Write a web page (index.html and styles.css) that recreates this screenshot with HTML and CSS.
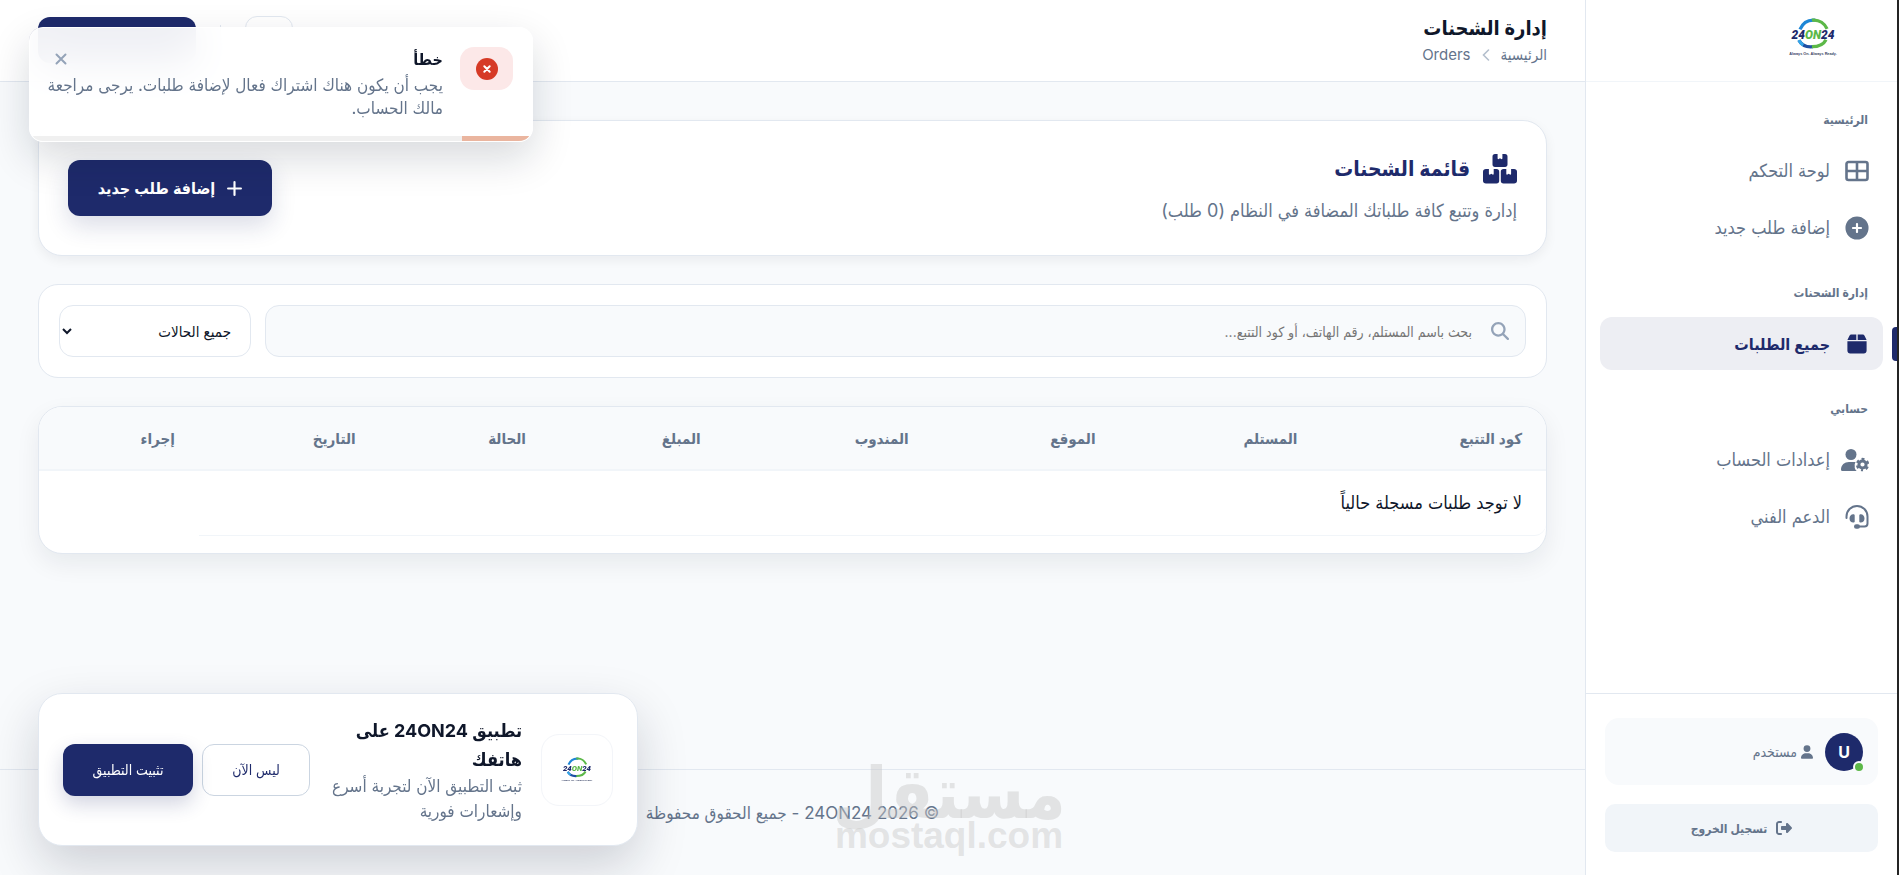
FILE: index.html
```html
<!DOCTYPE html>
<html lang="ar" dir="rtl">
  <head>
    <meta charset="UTF-8" />
    <meta name="viewport" content="width=device-width, initial-scale=1.0" />
    <title>إدارة الشحنات - 24ON24</title>
    <link rel="stylesheet" href="styles.css">
  </head>
  <body>
    <aside class="sidebar">
      <div class="brand">
        <svg class="brand-logo" viewBox="0 0 96 72" role="img" aria-label="24ON24">
          <g fill="none" stroke-width="6">
            <path d="M24 21 C30 7 41 3 52 4" stroke="#1d86d6" />
            <path d="M46 4 C60 2 70 11 74 20" stroke="#5cb848" />
            <path d="M22 41 C28 52 38 54 48 53" stroke="#1e4fa3" />
            <path d="M22 41 C24 46 27 48 30 50" stroke="#34a5e8" />
            <path d="M46 53 C60 53 68 48 72 40" stroke="#5cb848" />
          </g>
          <text x="48" y="38" text-anchor="middle" direction="ltr" class="logo-name"><tspan fill="#1e2a6b">24</tspan><tspan fill="#5cb848">ON</tspan><tspan fill="#1e2a6b">24</tspan></text>
          <text x="48" y="68" text-anchor="middle" direction="ltr" class="logo-tag">Always On. Always Ready.</text>
        </svg>
      </div>

      <nav class="nav">
        <h6 class="nav-label">الرئيسية</h6>
        <a href="#" class="nav-link">
          <svg class="nav-icon" viewBox="0 0 24 24"><path fill="none" stroke="currentColor" stroke-width="2.6" d="M3.500 3h17a2 2 0 0 1 2 2v14a2 2 0 0 1-2 2h-17a2 2 0 0 1-2-2V5a2 2 0 0 1 2-2zM12 3v18M2 12h20" /></svg>
          <span>لوحة التحكم</span>
        </a>
        <a href="#" class="nav-link">
          <svg class="nav-icon" viewBox="-10 -10 532 532"><path fill="currentColor" d="M256 512A256 256 0 1 0 256 0a256 256 0 1 0 0 512zM232 344V280H168c-13.300 0-24-10.700-24-24s10.700-24 24-24h64V168c0-13.300 10.700-24 24-24s24 10.700 24 24v64h64c13.300 0 24 10.700 24 24s-10.700 24-24 24H280v64c0 13.300-10.700 24-24 24s-24-10.700-24-24z" /></svg>
          <span>إضافة طلب جديد</span>
        </a>

        <h6 class="nav-label">إدارة الشحنات</h6>
        <a href="#" class="nav-link active">
          <svg class="nav-icon" viewBox="-56 -24 560 560"><path fill="currentColor" d="M50.700 58.500L0 160H208V32H93.700C75.500 32 58.900 42.300 50.700 58.500zM240 160H448L397.300 58.500C389.100 42.300 372.500 32 354.300 32H240V160zm208 32H0V416c0 35.300 28.700 64 64 64H384c35.300 0 64-28.700 64-64V192z" /></svg>
          <span>جميع الطلبات</span>
        </a>

        <h6 class="nav-label">حسابي</h6>
        <a href="#" class="nav-link">
          <svg class="nav-icon wide" viewBox="0 0 28 24">
            <circle cx="10" cy="6.500" r="5.500" fill="currentColor" />
            <path fill="currentColor" d="M0 21.500C0 17 3.500 14 8 14h4.500c.8 0 1.500.1 2.200.3-.9 1.100-1.200 2.300-.9 3.600-.5 1.700.4 3.600 1.900 5.100H1.300C.5 23 0 22.400 0 21.500z" />
            <circle cx="21.500" cy="16.500" r="3.600" fill="none" stroke="currentColor" stroke-width="3" />
            <circle cx="21.500" cy="16.500" r="5.500" fill="none" stroke="currentColor" stroke-width="2.400" stroke-dasharray="2.900 2.860" stroke-dashoffset="1.400" transform="rotate(90 21.500 16.500)" />
          </svg>
          <span>إعدادات الحساب</span>
        </a>
        <a href="#" class="nav-link">
          <svg class="nav-icon" viewBox="0 0 24 24">
            <path fill="none" stroke="currentColor" stroke-width="2" stroke-linecap="round" d="M1.500 13v-1.500a10.500 10.500 0 0 1 21 0v7a3 3 0 0 1-3 3H13" />
            <path fill="currentColor" d="M8.200 9.200c.9 0 1.500.5 1.500 1.200v6c0 .7-.6 1.200-1.500 1.200-2.100 0-3.700-1.900-3.700-4.200s1.600-4.200 3.700-4.200zM15.800 9.200c-.9 0-1.500.5-1.500 1.200v6c0 .7.6 1.200 1.500 1.200 2.100 0 3.700-1.900 3.700-4.200s-1.600-4.200-3.700-4.200z" />
            <rect x="9" y="19.300" width="6" height="4.400" rx="2.200" fill="currentColor" />
          </svg>
          <span>الدعم الفني</span>
        </a>
      </nav>

      <div class="sidebar-footer">
        <div class="user-card">
          <div class="avatar">U<span class="online"></span></div>
          <div class="user-role">
            <svg class="role-icon" viewBox="0 0 448 512"><path fill="currentColor" d="M224 256A128 128 0 1 0 224 0a128 128 0 1 0 0 256zm-45.700 48C79.800 304 0 383.800 0 482.300C0 498.700 13.300 512 29.700 512H418.300c16.400 0 29.700-13.300 29.700-29.700C448 383.800 368.200 304 269.700 304H178.300z" /></svg>
            <span>مستخدم</span>
          </div>
        </div>
        <button type="button" class="btn-logout">
          <svg class="logout-icon" viewBox="0 0 512 512"><path fill="currentColor" d="M377.900 105.900L500.700 228.700c7.200 7.200 11.300 17.100 11.300 27.300s-4.100 20.100-11.300 27.300L377.900 406.100c-6.400 6.400-15 9.900-24 9.900c-18.700 0-33.900-15.200-33.900-33.900l0-62.100-128 0c-17.700 0-32-14.300-32-32l0-64c0-17.700 14.300-32 32-32l128 0 0-62.100c0-18.700 15.200-33.900 33.900-33.900c9 0 17.600 3.600 24 9.900zM160 96L96 96c-17.700 0-32 14.300-32 32l0 256c0 17.700 14.300 32 32 32l64 0c17.700 0 32 14.300 32 32s-14.300 32-32 32l-64 0c-53 0-96-43-96-96L0 128C0 75 43 32 96 32l64 0c17.700 0 32 14.300 32 32s-14.300 32-32 32z" /></svg>
          <span>تسجيل الخروج</span>
        </button>
      </div>
    </aside>

    <div class="page">
      <header class="topbar">
        <div>
          <h1 class="topbar-title">إدارة الشحنات</h1>
          <nav class="breadcrumb">
            <a href="#">الرئيسية</a>
            <svg class="crumb-sep" viewBox="0 0 8 12"><path fill="none" stroke="currentColor" stroke-width="1.600" stroke-linecap="round" d="M6.500 1L1.500 6l5 5" /></svg>
            <span>Orders</span>
          </nav>
        </div>
        <div class="topbar-actions">
          <button type="button" class="btn-square" aria-label="الإشعارات"></button>
          <span class="divider"></span>
          <button type="button" class="btn-top" aria-label="إضافة طلب جديد"></button>
        </div>
      </header>

      <main class="content">
        <section class="card page-head">
          <div>
            <h2 class="page-title">
              <svg class="boxes-icon" viewBox="0 0 34 30">
                <g fill="currentColor">
                  <path d="M12 0h2.600v4.200c0 .8.600 1.200 1.200.8l1.200-.8 1.200.8c.6.400 1.200 0 1.200-.8V0h2.600c1.600 0 2.500 1 2.500 2.500v8c0 1.500-.9 2.500-2.500 2.500H12c-1.600 0-2.500-1-2.500-2.500v-8C9.500 1 10.400 0 12 0z" />
                  <path d="M3 15h2.900v4.800c0 .8.600 1.200 1.200.8l1.200-.8 1.200.8c.6.400 1.200 0 1.200-.8V15h2.800c1.700 0 2.700 1 2.700 2.700v9c0 1.700-1 2.800-2.700 2.800H3C1.200 29.500 0 28.400 0 26.700v-9C0 16 1.200 15 3 15z" />
                  <path d="M20.500 15h2.800v4.800c0 .8.600 1.200 1.200.8l1.200-.8 1.200.8c.6.400 1.200 0 1.200-.8V15H31c1.800 0 3 1 3 2.700v9c0 1.700-1.200 2.800-3 2.800H20.500c-1.700 0-2.700-1.100-2.700-2.800v-9c0-1.700 1-2.700 2.700-2.700z" />
                </g>
              </svg>
              <span>قائمة الشحنات</span>
            </h2>
            <p class="page-sub">إدارة وتتبع كافة طلباتك المضافة في النظام (0 طلب)</p>
          </div>
          <a href="#" class="btn-add">
            <svg class="plus-icon" viewBox="0 0 14 14"><path stroke="currentColor" stroke-width="2" stroke-linecap="round" d="M7 1v12M1 7h12" /></svg>
            <span>إضافة طلب جديد</span>
          </a>
        </section>

        <form class="card filters">
          <label class="search">
            <svg class="search-icon" viewBox="0 0 512 512"><path fill="currentColor" d="M416 208c0 45.900-14.900 88.300-40 122.700L502.600 457.400c12.500 12.500 12.500 32.800 0 45.300s-32.800 12.500-45.300 0L330.700 376c-34.400 25.200-76.800 40-122.700 40C93.100 416 0 322.900 0 208S93.100 0 208 0S416 93.100 416 208zM208 352a144 144 0 1 0 0-288 144 144 0 1 0 0 288z" /></svg>
            <input type="text" class="search-input" placeholder="بحث باسم المستلم، رقم الهاتف، أو كود التتبع..." />
          </label>
          <select class="status-select" aria-label="الحالة">
            <option>جميع الحالات</option>
          </select>
        </form>

        <section class="card table-card">
          <table class="orders">
            <thead>
              <tr>
                <th class="col-code">كود التتبع</th>
                <th class="col-client">المستلم</th>
                <th class="col-place">الموقع</th>
                <th class="col-driver">المندوب</th>
                <th class="col-amount">المبلغ</th>
                <th class="col-status">الحالة</th>
                <th class="col-date">التاريخ</th>
                <th>إجراء</th>
              </tr>
            </thead>
            <tbody>
              <tr>
                <td colspan="7">لا توجد طلبات مسجلة حالياً</td>
              </tr>
            </tbody>
          </table>
        </section>
      </main>

      <footer class="footer">
        <p>© 2026 24ON24 - جميع الحقوق محفوظة</p>
        <div class="watermark">
          <span class="wm-ar">مستقل</span>
          <span class="wm-en">mostaql.com</span>
        </div>
      </footer>
    </div>

    <div class="toast" role="alert">
      <div class="toast-icon">
        <svg class="error-icon" viewBox="0 0 22 22"><circle cx="11" cy="11" r="11" fill="#d63a26" /><path stroke="#fff" stroke-width="2" stroke-linecap="round" d="M8.300 8.300l5.400 5.400M13.700 8.300l-5.400 5.400" /></svg>
      </div>
      <div class="toast-body">
        <div class="toast-head">
          <strong class="toast-title">خطأ</strong>
          <button type="button" class="toast-close" aria-label="إغلاق">
            <svg class="close-icon" viewBox="0 0 12 12"><path stroke="currentColor" stroke-width="2" stroke-linecap="round" d="M1.500 1.500l9 9M10.500 1.500l-9 9" /></svg>
          </button>
        </div>
        <p class="toast-text">يجب أن يكون هناك اشتراك فعال لإضافة طلبات. يرجى مراجعة مالك الحساب.</p>
      </div>
      <div class="toast-progress"><div class="toast-bar" style="width: 14%"></div></div>
    </div>

    <div class="install">
      <div class="install-logo">
        <svg class="install-svg" viewBox="0 0 96 72" role="img" aria-label="24ON24">
          <g fill="none" stroke-width="6">
            <path d="M24 21 C30 7 41 3 52 4" stroke="#1d86d6" />
            <path d="M46 4 C60 2 70 11 74 20" stroke="#5cb848" />
            <path d="M22 41 C28 52 38 54 48 53" stroke="#1e4fa3" />
            <path d="M22 41 C24 46 27 48 30 50" stroke="#34a5e8" />
            <path d="M46 53 C60 53 68 48 72 40" stroke="#5cb848" />
          </g>
          <text x="48" y="38" text-anchor="middle" direction="ltr" class="logo-name"><tspan fill="#1e2a6b">24</tspan><tspan fill="#5cb848">ON</tspan><tspan fill="#1e2a6b">24</tspan></text>
          <text x="48" y="68" text-anchor="middle" direction="ltr" class="logo-tag">Always On. Always Ready.</text>
        </svg>
      </div>
      <div class="install-text">
        <strong class="install-title">تطبيق 24ON24 على هاتفك</strong>
        <p class="install-desc">ثبت التطبيق الآن لتجربة أسرع وإشعارات فورية</p>
      </div>
      <div class="install-actions">
        <button type="button" class="btn-later">ليس الآن</button>
        <button type="button" class="btn-install">تثبيت التطبيق</button>
      </div>
    </div>
  </body>
</html>
```

FILE: styles.css
```css
* {
  box-sizing: border-box;
}

body {
  margin: 0;
  display: flex;
  min-height: 100vh;
  border-right: 2px solid #242424;
  font-family: Inter, "DejaVu Sans Condensed", "DejaVu Sans", sans-serif;
  font-size: 15px;
  color: #0f172a;
  background: #f8fafc;
}

h1, h2, h6, p {
  margin: 0;
}

a {
  color: inherit;
  text-decoration: none;
}

button, input, select {
  font-family: inherit;
}

button {
  cursor: pointer;
}

svg {
  flex: none;
}

.logo-name {
  font: italic 900 22px Roboto, sans-serif;
}

.logo-tag {
  font: 700 7px "Liberation Sans", sans-serif;
  fill: #3b4668;
}

/* sidebar */
.sidebar {
  width: 312px;
  flex: none;
  display: flex;
  flex-direction: column;
  background: #fff;
  border-left: 1px solid #e2e8f0;
}

.brand {
  height: 82px;
  padding: 18px 58px;
  border-bottom: 1px solid #f1f5f9;
}

.brand-logo {
  display: block;
  width: 52px;
  height: 39px;
}

.nav {
  flex: 1;
  padding: 3px 14px;
}

.nav-label {
  padding: 25px 15px 14px;
  font-size: 12px;
  line-height: 20px;
  font-weight: 600;
  color: #64748b;
}

.nav-link {
  position: relative;
  display: flex;
  align-items: center;
  gap: 15px;
  height: 53px;
  margin-bottom: 4px;
  padding: 0 14px;
  border-radius: 12px;
  font-size: 18px;
  color: #64748b;
}

.nav-link.active {
  background: #edeef3;
  color: #1e2a6b;
  font-size: 16px;
  font-weight: 600;
}

.nav-link.active::before {
  content: "";
  position: absolute;
  top: 10px;
  right: -14px;
  width: 5px;
  height: 34px;
  border-radius: 4px 0 0 4px;
  background: #1e2a6b;
}

.nav-icon {
  width: 24px;
  height: 24px;
}

.nav-icon.wide {
  width: 28px;
  margin-left: -4px;
}

.sidebar-footer {
  padding: 24px 19px 23px;
  border-top: 1px solid #e2e8f0;
}

.user-card {
  display: flex;
  align-items: center;
  gap: 12px;
  height: 67px;
  margin-bottom: 19px;
  padding: 0 15px;
  border-radius: 14px;
  background: #f8fafc;
}

.avatar {
  position: relative;
  width: 38px;
  height: 38px;
  border-radius: 50%;
  background: #1e2a6b;
  color: #fff;
  font-weight: 700;
  font-size: 16px;
  line-height: 38px;
  text-align: center;
}

.online {
  position: absolute;
  left: 28px;
  bottom: -2px;
  width: 12px;
  height: 12px;
  border: 2px solid #f8fafc;
  border-radius: 50%;
  background: #5cb848;
}

.user-role {
  display: flex;
  align-items: center;
  gap: 4px;
  font-size: 14px;
  color: #64748b;
}

.role-icon {
  width: 12px;
  height: 14px;
}

.btn-logout {
  display: flex;
  align-items: center;
  justify-content: center;
  gap: 9px;
  width: 100%;
  height: 48px;
  border: 0;
  border-radius: 10px;
  background: #f1f5f9;
  color: #64748b;
  font-size: 12px;
  font-weight: 600;
}

.logout-icon {
  width: 16px;
  height: 16px;
}

/* page */
.page {
  flex: 1;
  min-width: 0;
  display: flex;
  flex-direction: column;
}

.topbar {
  display: flex;
  justify-content: space-between;
  align-items: flex-start;
  height: 82px;
  padding: 13px 38px 0;
  background: #fff;
  border-bottom: 1px solid #e2e8f0;
}

.topbar-title {
  font-size: 20px;
  line-height: 30px;
  font-weight: 700;
}

.breadcrumb {
  display: flex;
  align-items: center;
  gap: 11px;
  font-size: 15px;
  line-height: 24px;
  color: #64748b;
}

.crumb-sep {
  width: 8px;
  height: 12px;
  color: #b4bfcd;
}

.topbar-actions {
  display: flex;
  align-items: center;
  gap: 24px;
  padding-top: 3px;
}

.btn-square {
  width: 48px;
  height: 48px;
  border: 1px solid #e2e8f0;
  border-radius: 12px;
  background: #fff;
}

.divider {
  width: 1px;
  height: 30px;
  background: #e2e8f0;
}

.btn-top {
  width: 158px;
  height: 46px;
  border: 0;
  border-radius: 12px;
  background: #1e2a6b;
}

.content {
  flex: 1;
  display: flex;
  flex-direction: column;
  gap: 28px;
  padding: 38px;
}

.card {
  background: #fff;
  border: 1px solid #e2e8f0;
  border-radius: 24px;
}

.page-head {
  display: flex;
  justify-content: space-between;
  height: 136px;
  padding: 28px 29px;
  box-shadow: 0 4px 12px rgba(15, 23, 42, 0.06);
}

.page-title {
  display: flex;
  align-items: center;
  gap: 13px;
  font-size: 21px;
  line-height: 40px;
  font-weight: 700;
  color: #1e2a6b;
}

.boxes-icon {
  width: 34px;
  height: 30px;
}

.page-sub {
  margin-top: 8px;
  font-size: 18px;
  line-height: 28px;
  color: #64748b;
}

.btn-add {
  display: flex;
  align-items: center;
  justify-content: center;
  align-self: center;
  gap: 12px;
  width: 204px;
  height: 56px;
  border-radius: 12px;
  background: #1e2a6b;
  color: #fff;
  font-size: 16px;
  font-weight: 600;
  box-shadow: 0 10px 24px rgba(30, 42, 107, 0.16);
}

.plus-icon {
  width: 15px;
  height: 15px;
}

.filters {
  display: flex;
  gap: 14px;
  padding: 20px;
  border-radius: 20px;
}

.search {
  flex: 1;
  display: flex;
  align-items: center;
  gap: 19px;
  height: 52px;
  padding: 0 16px;
  border: 1px solid #e2e8f0;
  border-radius: 14px;
  background: #f8fafc;
}

.search-icon {
  width: 18px;
  height: 18px;
  color: #94a3b8;
}

.search-input {
  flex: 1;
  min-width: 0;
  padding: 0;
  border: 0;
  outline: 0;
  background: none;
  font-size: 14px;
}

.search-input::placeholder {
  color: #757575;
}

.status-select {
  width: 192px;
  height: 52px;
  padding: 0 15px 0 5px;
  border: 1px solid #e2e8f0;
  border-radius: 14px;
  background: #fff;
  color: #0f172a;
  font-size: 15px;
}

.table-card {
  padding-bottom: 17px;
  overflow: hidden;
  box-shadow: 0 10px 24px rgba(15, 23, 42, 0.07);
}

.orders {
  width: 100%;
  table-layout: fixed;
  border-collapse: separate;
  border-spacing: 0;
  text-align: right;
}

.orders th {
  height: 64px;
  padding: 0 24px;
  background: #f8fafc;
  border-bottom: 2px solid #f1f5f9;
  font-size: 15px;
  font-weight: 600;
  color: #64748b;
}

.orders td {
  height: 65px;
  padding: 0 24px 2px;
  border-bottom: 1px solid #f1f5f9;
  border-radius: 0 12px 12px 0;
  font-size: 18px;
}

.col-code {
  width: 14.9%;
}

.col-client {
  width: 13.4%;
}

.col-place {
  width: 12.4%;
}

.col-driver {
  width: 13.8%;
}

.col-amount {
  width: 11.6%;
}

.col-status {
  width: 11.3%;
}

.col-date {
  width: 12%;
}

.footer {
  position: relative;
  height: 106px;
  padding-top: 30px;
  border-top: 1px solid #e2e8f0;
  text-align: center;
  font-size: 17px;
  line-height: 26px;
  color: #64748b;
}

.watermark {
  position: absolute;
  top: -4px;
  right: 522px;
  display: flex;
  flex-direction: column;
  align-items: center;
  width: 228px;
  color: rgba(200, 200, 200, 0.45);
  font-weight: 700;
}

.wm-ar {
  font-size: 71px;
  line-height: 52px;
}

.wm-en {
  font-family: "Liberation Sans", sans-serif;
  font-size: 37px;
  line-height: 36px;
}

/* error toast */
.toast {
  position: fixed;
  top: 27px;
  left: 29px;
  display: flex;
  gap: 17px;
  width: 504px;
  height: 115px;
  padding: 19px 19px 0 16px;
  border: 1px solid #fff;
  border-radius: 14px;
  overflow: hidden;
  background: rgba(255, 255, 255, 0.93);
  backdrop-filter: blur(20px);
  box-shadow: 0 16px 40px rgba(15, 23, 42, 0.16);
}

.toast-icon {
  display: flex;
  align-items: center;
  justify-content: center;
  flex: none;
  width: 53px;
  height: 43px;
  border-radius: 14px;
  background: #fce8e8;
}

.error-icon {
  width: 22px;
  height: 22px;
}

.toast-body {
  flex: 1;
}

.toast-head {
  display: flex;
  justify-content: space-between;
  align-items: center;
  height: 24px;
  margin-bottom: 3px;
}

.toast-title {
  font-size: 16px;
  font-weight: 600;
}

.toast-close {
  display: flex;
  padding: 9px;
  border: 0;
  background: none;
  color: #94a3b8;
}

.close-icon {
  width: 12px;
  height: 12px;
}

.toast-text {
  font-size: 17px;
  line-height: 23px;
  color: #64748b;
}

.toast-progress {
  position: absolute;
  right: 0;
  bottom: 0;
  left: 0;
  height: 5px;
  background: #f0f0f0;
}

.toast-bar {
  height: 100%;
  background: #eab59f;
}

/* install prompt */
.install {
  position: fixed;
  left: 38px;
  bottom: 29px;
  display: flex;
  align-items: center;
  gap: 19px;
  width: 600px;
  height: 153px;
  padding: 0 24px;
  border: 1px solid #e2e8f0;
  border-radius: 24px;
  background: #fff;
  box-shadow: 0 20px 50px rgba(15, 23, 42, 0.18);
}

.install-logo {
  display: flex;
  align-items: center;
  justify-content: center;
  flex: none;
  width: 72px;
  height: 72px;
  border: 1px solid #f3f5f9;
  border-radius: 18px;
}

.install-svg {
  width: 34px;
  height: 26px;
}

.install-text {
  flex: 1;
}

.install-title {
  display: block;
  font-size: 18px;
  line-height: 29px;
  font-weight: 700;
}

.install-desc {
  font-size: 17px;
  line-height: 25px;
  color: #64748b;
}

.install-actions {
  display: flex;
  gap: 9px;
}

.btn-later,
.btn-install {
  height: 52px;
  border-radius: 12px;
  font-size: 14px;
}

.btn-later {
  width: 108px;
  border: 1px solid #cbd5e1;
  background: #fff;
  color: #1e2a6b;
}

.btn-install {
  width: 130px;
  border: 0;
  background: #1e2a6b;
  color: #fff;
  box-shadow: 0 8px 20px rgba(30, 42, 107, 0.2);
}
```
